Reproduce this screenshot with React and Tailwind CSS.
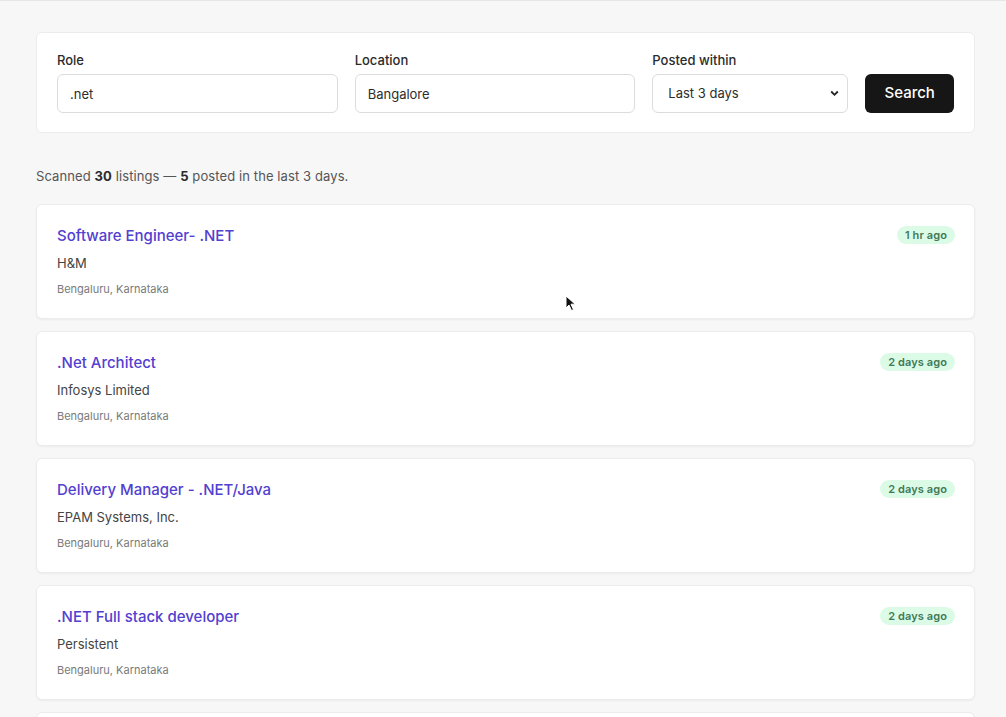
import React from "react";

const jobs = [
  {
    title: "Software Engineer- .NET",
    company: "H&M",
    location: "Bengaluru, Karnataka",
    posted: "1 hr ago",
  },
  {
    title: ".Net Architect",
    company: "Infosys Limited",
    location: "Bengaluru, Karnataka",
    posted: "2 days ago",
  },
  {
    title: "Delivery Manager - .NET/Java",
    company: "EPAM Systems, Inc.",
    location: "Bengaluru, Karnataka",
    posted: "2 days ago",
  },
  {
    title: ".NET Full stack developer",
    company: "Persistent",
    location: "Bengaluru, Karnataka",
    posted: "2 days ago",
  },
  {
    title: "Senior .NET Developer",
    company: "Capgemini",
    location: "Bengaluru, Karnataka",
    posted: "3 days ago",
  },
];

function Field({ label, children, className }) {
  return (
    <div className={`flex flex-col gap-[5px] ${className}`}>
      <label className="text-[13px] leading-[18px] font-medium text-[#2b2b2b]">
        {label}
      </label>
      {children}
    </div>
  );
}

function App() {
  return (
    <div
      className="relative min-h-[717px] bg-[#f7f7f7] border-t border-[#e6e6e6]"
      style={{ fontFamily: "Inter, 'Noto Sans', sans-serif" }}
    >
      <div className="w-[939px] ml-[36px] pt-[31px] pb-8">
        <div className="bg-white rounded-md border border-[#ececec] px-5 pt-[18px] pb-[19px] flex items-end gap-[17px]">
          <Field label="Role" className="w-[282px]">
            <input
              defaultValue=".net"
              className="h-[39px] rounded-md border border-[#dcdcdc] px-3 text-[13px] text-[#2d2d2d] outline-none"
            />
          </Field>
          <Field label="Location" className="w-[282px]">
            <input
              defaultValue="Bangalore"
              className="h-[39px] rounded-md border border-[#dcdcdc] px-3 text-[13px] text-[#2d2d2d] outline-none"
            />
          </Field>
          <Field label="Posted within" className="w-[197px]">
            <div className="relative">
              <select
                defaultValue="3"
                className="appearance-none w-full h-[39px] rounded-md border border-[#dcdcdc] bg-white pl-[15px] text-[13px] text-[#2d2d2d] outline-none"
              >
                <option value="1">Last 24 hours</option>
                <option value="3">Last 3 days</option>
                <option value="7">Last 7 days</option>
              </select>
              <svg
                className="absolute right-[9px] top-[16px] pointer-events-none"
                width="9"
                height="7"
                viewBox="0 0 9 7"
              >
                <path d="M1.2 1.5 4.5 4.8 7.8 1.5" fill="none" stroke="#222" strokeWidth="1.8" />
              </svg>
            </div>
          </Field>
          <button className="h-[39px] w-[89px] rounded-md bg-[#161616] text-white text-[15px] font-medium">
            Search
          </button>
        </div>

        <p className="mt-[34px] text-[13px] leading-[18px] tracking-[0.1px] text-[#555]">
          Scanned <b className="text-[#2b2b2b]">30</b> listings —{" "}
          <b className="text-[#2b2b2b]">5</b> posted in the last 3 days.
        </p>

        <div className="mt-[19px] flex flex-col gap-[12px]">
          {jobs.map((job, i) => (
            <div
              key={i}
              className="bg-white rounded-md border border-[#ececec] shadow-[0_1px_2px_rgba(0,0,0,0.05)] pl-5 pr-[19px] pt-[21px] pb-[21px] flex justify-between"
            >
              <div>
                <a className="block text-[15px] leading-[20px] font-medium text-[#5240d0]">
                  {job.title}
                </a>
                <div className="mt-[8px] text-[13px] leading-[18px] text-[#444]">
                  {job.company}
                </div>
                <div className="mt-[9px] text-[11px] leading-[16px] text-[#7a7a7a]">
                  {job.location}
                </div>
              </div>
              <div className="h-[18px] px-[8px] rounded-full bg-[#dcfbe7] text-[11px] leading-[18px] font-semibold tracking-[0.1px] text-[#3f7a58]">
                {job.posted}
              </div>
            </div>
          ))}
        </div>
      </div>

      {/* pointer */}
      <svg
        className="absolute left-[565px] top-[294px]"
        width="12"
        height="17"
        viewBox="0 0 12 17"
      >
        <path
          d="M1 1 L1 13 L4 10 L6.5 15.5 L8.5 14.6 L6 9.2 L10.2 9.2 Z"
          fill="#111"
          stroke="#fff"
          strokeWidth="1"
        />
      </svg>
    </div>
  );
}

export default App;
